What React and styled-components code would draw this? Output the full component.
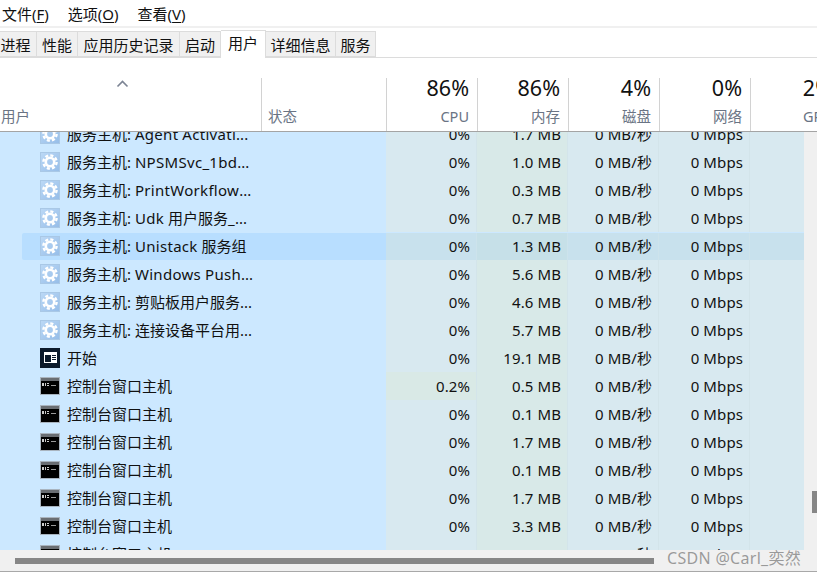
import React from "react";
import styled, { createGlobalStyle } from "styled-components";

const FONT = `"Noto Sans", "Noto Sans CJK SC", sans-serif`;

const Global = createGlobalStyle`
  html, body { margin: 0; padding: 0; background: #fff; }
  body { font-family: ${FONT}; color: #111; }
`;

const Window = styled.div`
  position: relative;
  width: 817px;
  height: 576px;
  overflow: hidden;
  display: flex;
  flex-direction: column;
  background: #fff;
`;

const MenuBar = styled.div`
  display: flex;
  align-items: center;
  gap: 19px;
  padding: 1px 0 1px 2px;
  height: 24px;
  font-size: 15px;
  border-bottom: 2px solid #f0f0f0;
`;
const MenuItem = styled.span`
  white-space: nowrap;
  u { text-underline-offset: 2px; }
`;

const TabBar = styled.div`
  height: 28px;
  margin-top: 2px;
  box-sizing: border-box;
  display: flex;
  align-items: flex-end;
  border-bottom: 1px solid #dcdcdc;
`;
const Tab = styled.div`
  box-sizing: border-box;
  width: ${(p) => p.$w}px;
  height: ${(p) => (p.$active ? 28 : 26)}px;
  margin-bottom: ${(p) => (p.$active ? -1 : 0)}px;
  display: flex;
  align-items: center;
  justify-content: center;
  font-size: 15px;
  white-space: nowrap;
  padding-bottom: ${(p) => (p.$active ? 4 : 0)}px;
  padding-right: ${(p) => p.$inset || 0}px;
  background: ${(p) => (p.$active ? "#fff" : "#f0f0f0")};
  border: 1px solid #dcdcdc;
  border-left: none;
  border-bottom: ${(p) => (p.$active ? "none" : "1px solid #dcdcdc")};
`;

const Header = styled.div`
  height: 74px;
  flex: none;
  box-sizing: border-box;
  display: grid;
  grid-template-columns: 262px 125px 91px 91px 91px 91px 91px;
  padding-top: 20px;
  border-bottom: 1px solid #a4a4a4;
`;
const NameHead = styled.div`
  display: flex;
  flex-direction: column;
  justify-content: space-between;
  align-items: center;
  border-right: 1px solid #d2d2d2;
  height: 53px;
`;
const Chevron = styled.svg`
  width: 13px;
  height: 8px;
  margin-top: 2px;
  margin-left: -17px;
`;
const HeadLabel = styled.div`
  align-self: flex-start;
  padding-left: ${(p) => p.$pad}px;
  font-size: 14.5px;
  line-height: 20px;
  color: #6a7484;
  margin-bottom: 5px;
`;
const StatusHead = styled.div`
  box-sizing: border-box;
  height: 53px;
  display: flex;
  flex-direction: column;
  justify-content: flex-end;
  border-right: 1px solid #d2d2d2;
`;
const MetricHead = styled.div`
  box-sizing: border-box;
  height: 53px;
  padding-right: 8px;
  text-align: right;
  border-right: 1px solid #d2d2d2;
  white-space: nowrap;
`;
const Percent = styled.div`
  font-size: 21.5px;
  line-height: 20px;
  color: #111;
`;
const MetricName = styled.div`
  font-size: 14.5px;
  line-height: 20px;
  margin-top: 8px;
  color: #6a7484;
`;

const Body = styled.div`
  flex: 1;
  min-height: 0;
  display: flex;
`;
const List = styled.div`
  width: 804px;
  overflow: hidden;
  background: #cce8ff;
`;
const Rows = styled.div`
  margin-top: -12px;
`;
const Row = styled.div`
  height: 28px;
  box-sizing: border-box;
  padding: 1px 0 0 22px;
  display: grid;
  grid-template-columns: 364px 91px 91px 91px 91px 1fr;
  font-size: 15px;
  color: #111;
`;
const NameCell = styled.div`
  box-sizing: border-box;
  display: flex;
  align-items: center;
  gap: 7px;
  padding: 0 0 2px 18px;
  white-space: nowrap;
  border-radius: 2px 0 0 2px;
  background: ${(p) => (p.$hover ? "#b8deff" : "transparent")};
`;
const Latin = styled.span`
  letter-spacing: 0.3px;
`;
const Cell = styled.div`
  box-sizing: border-box;
  display: flex;
  align-items: center;
  justify-content: flex-end;
  padding: 0 6px ${(p) => (p.$hover ? 2 : 1)}px 0;
  white-space: nowrap;
  letter-spacing: 0.1px;
  margin-top: ${(p) => (p.$hover ? 0 : -1)}px;
  border-right: 1px solid ${(p) => (p.$hover ? "#cde3ec" : "#d3e4ea")};
  background: ${(p) => p.$bg};
`;
const Fill = styled.div`
  margin-top: ${(p) => (p.$hover ? 0 : -1)}px;
  background: ${(p) => p.$bg};
`;

const VScroll = styled.div`
  width: 13px;
  background: #f0f0f0;
  padding: 359px 0 0 8px;
  box-sizing: border-box;
`;
const VThumb = styled.div`
  width: 5px;
  height: 22px;
  background: #868686;
`;
const HScroll = styled.div`
  height: 22px;
  flex: none;
  box-sizing: border-box;
  background: #f0f0f0;
  border-bottom: 1px solid #a8a8a8;
  padding: 8px 0 0 15px;
  margin-bottom: 4px;
`;
const HThumb = styled.div`
  width: 639px;
  height: 6px;
  background: #868686;
`;
const Watermark = styled.div`
  position: absolute;
  left: 667px;
  top: 548px;
  font-size: 16px;
  line-height: 20px;
  letter-spacing: 0.3px;
  color: rgba(120, 120, 120, 0.72);
  white-space: nowrap;
`;

const GearIcon = () => (
  <svg width="20" height="20" viewBox="0 0 20 20" style={{ flex: "none" }}>
    <defs>
      <linearGradient id="g" x1="0" y1="0" x2="1" y2="1">
        <stop offset="0" stopColor="#bcd9f6" />
        <stop offset="1" stopColor="#96bde8" />
      </linearGradient>
    </defs>
    <rect x="0.5" y="0.5" width="19" height="19" fill="url(#g)" stroke="#a9c8e6" />
    <circle cx="10" cy="10" r="6.6" fill="none" stroke="#fff" strokeWidth="2.4" strokeDasharray="3.1 2.1" />
    <circle cx="10" cy="10" r="4.2" fill="none" stroke="#fff" strokeWidth="2.6" />
  </svg>
);
const StartIcon = () => (
  <svg width="20" height="20" viewBox="0 0 20 20" style={{ flex: "none" }}>
    <rect width="20" height="20" fill="#0b1a2b" />
    <rect x="4" y="4" width="13" height="11" fill="#fff" />
    <rect x="5" y="7" width="6" height="7" fill="#0b1a2b" />
    <rect x="12" y="7" width="4" height="1" fill="#0b1a2b" />
    <rect x="12" y="9" width="4" height="1" fill="#0b1a2b" />
    <rect x="12" y="11" width="4" height="1" fill="#0b1a2b" />
  </svg>
);
const ConsoleIcon = () => (
  <svg width="20" height="20" viewBox="0 0 20 20" style={{ flex: "none" }}>
    <rect y="1" width="20" height="18" fill="#a9b4bf" />
    <rect x="1" y="2" width="18" height="16" fill="#000" />
    <rect x="1" y="2" width="18" height="3" fill="#6a6e73" />
    <rect x="2" y="7" width="2" height="3" fill="#ccc" />
    <rect x="5" y="7" width="1" height="3" fill="#ccc" />
    <rect x="7" y="7" width="2" height="1" fill="#ccc" />
    <rect x="7" y="9" width="2" height="1" fill="#ccc" />
    <rect x="11" y="9" width="5" height="1" fill="#999" />
  </svg>
);

const CPU = "#d8e9f0";
const MEM = "#d8e9e8";
const CPU_H = "#c8e1ed";
const MEM_H = "#c6e0e8";
const HOT = "#d9e9e6";

const gear = "gear";
const cons = "console";
const data = [
  [gear, "服务主机: Agent Activati...", "0%", "1.7 MB"],
  [gear, "服务主机: NPSMSvc_1bd...", "0%", "1.0 MB"],
  [gear, "服务主机: PrintWorkflow...", "0%", "0.3 MB"],
  [gear, "服务主机: Udk 用户服务_...", "0%", "0.7 MB"],
  [gear, "服务主机: Unistack 服务组", "0%", "1.3 MB", true],
  [gear, "服务主机: Windows Push...", "0%", "5.6 MB"],
  [gear, "服务主机: 剪贴板用户服务...", "0%", "4.6 MB"],
  [gear, "服务主机: 连接设备平台用...", "0%", "5.7 MB"],
  ["start", "开始", "0%", "19.1 MB"],
  [cons, "控制台窗口主机", "0.2%", "0.5 MB"],
  [cons, "控制台窗口主机", "0%", "0.1 MB"],
  [cons, "控制台窗口主机", "0%", "1.7 MB"],
  [cons, "控制台窗口主机", "0%", "0.1 MB"],
  [cons, "控制台窗口主机", "0%", "1.7 MB"],
  [cons, "控制台窗口主机", "0%", "3.3 MB"],
  [cons, "控制台窗口主机", "0%", "5.0 MB"],
];

const icons = { gear: GearIcon, start: StartIcon, console: ConsoleIcon };

const tabs = [
  ["进程", 37, false, 5],
  ["性能", 41],
  ["应用历史记录", 102],
  ["启动", 41],
  ["用户", 45, true],
  ["详细信息", 70],
  ["服务", 40],
];
const metrics = [
  ["86%", "CPU"],
  ["86%", "内存"],
  ["4%", "磁盘"],
  ["0%", "网络"],
  ["2%", "GPU"],
];

const NameText = ({ text }) => (
  <span>
    {text.split(/([A-Za-z0-9_]+)/).map((part, i) =>
      i % 2 ? <Latin key={i}>{part}</Latin> : part
    )}
  </span>
);

export default function App() {
  return (
    <Window>
      <Global />
      <MenuBar>
        <MenuItem>文件(<u>F</u>)</MenuItem>
        <MenuItem>选项(<u>O</u>)</MenuItem>
        <MenuItem>查看(<u>V</u>)</MenuItem>
      </MenuBar>
      <TabBar>
        {tabs.map(([t, w, a, inset]) => (
          <Tab key={t} $w={w} $active={a} $inset={inset}>{t}</Tab>
        ))}
      </TabBar>
      <Header>
        <NameHead>
          <Chevron viewBox="0 0 13 8">
            <path d="M1.5 6.5 L6.5 1.5 L11.5 6.5" fill="none" stroke="#7c8494" strokeWidth="1.6" />
          </Chevron>
          <HeadLabel $pad={1}>用户</HeadLabel>
        </NameHead>
        <StatusHead>
          <HeadLabel $pad={6}>状态</HeadLabel>
        </StatusHead>
        {metrics.map(([p, n]) => (
          <MetricHead key={n}>
            <Percent>{p}</Percent>
            <MetricName>{n}</MetricName>
          </MetricHead>
        ))}
      </Header>
      <Body>
        <List>
          <Rows>
            {data.map(([icon, name, cpu, mem, hover], i) => {
              const Icon = icons[icon];
              const cpuBg = hover ? CPU_H : cpu === "0.2%" ? HOT : CPU;
              const memBg = hover ? MEM_H : MEM;
              const other = hover ? CPU_H : CPU;
              return (
                <Row key={i}>
                  <NameCell $hover={hover}>
                    <Icon />
                    <NameText text={name} />
                  </NameCell>
                  <Cell $bg={cpuBg} $hover={hover}>{cpu}</Cell>
                  <Cell $bg={memBg} $hover={hover}>{mem}</Cell>
                  <Cell $bg={other} $hover={hover}>0 MB/秒</Cell>
                  <Cell $bg={other} $hover={hover}>0 Mbps</Cell>
                  <Fill $bg={other} $hover={hover} />
                </Row>
              );
            })}
          </Rows>
        </List>
        <VScroll>
          <VThumb />
        </VScroll>
      </Body>
      <HScroll>
        <HThumb />
      </HScroll>
      <Watermark>CSDN @Carl_奕然</Watermark>
    </Window>
  );
}
